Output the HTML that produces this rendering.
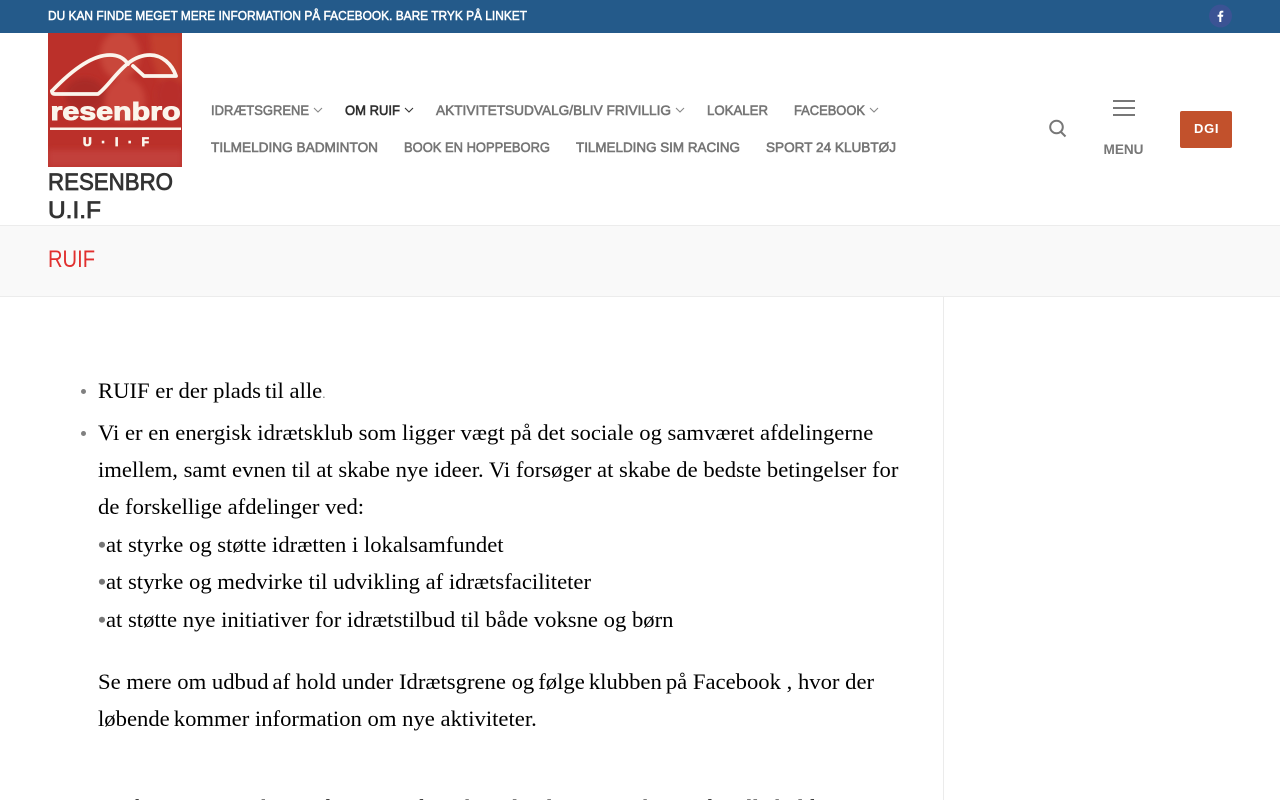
<!DOCTYPE html>
<html lang="da"><head><meta charset="utf-8"><title>RUIF</title>
<style>
html,body{margin:0;padding:0;width:1280px;height:800px;overflow:hidden;background:#fff}
body{position:relative}
.a{position:absolute}
#top{left:0;top:0;width:1280px;height:33px;background:#245a8a}
#title{left:0;top:225px;width:1280px;height:70px;background:#f9f9f9;border-top:1px solid #ececec;border-bottom:1px solid #ececec}
#side{left:943px;top:297px;width:1px;height:503px;background:#ebebeb}
#btn{left:1180px;top:111px;width:52px;height:37px;background:#c2512c;border-radius:2px}
.t{position:absolute;left:98px;font:22.67px/37px "Liberation Serif",serif;color:#000;white-space:nowrap}
.t i{font-style:normal;color:#777;font-weight:bold}
.t b{font-weight:normal;font-size:16px}
.d{position:absolute;left:81px;width:5px;height:5px;border-radius:50%;background:#808080}
svg{position:absolute;left:0;top:0}
.s{font-family:"Liberation Sans",sans-serif}
.n{font:14px "Liberation Sans",sans-serif;fill:#757575;stroke:#757575;stroke-width:.6}
</style></head><body>
<div class="a" id="top"></div>
<div class="a" id="title"></div>
<div class="a" id="side"></div>
<div class="a" id="btn"></div>

<svg width="1280" height="800" viewBox="0 0 1280 800">
<defs>
<filter id="b"><feGaussianBlur stdDeviation="3"/></filter>
<clipPath id="c"><rect x="48" y="33" width="134" height="134"/></clipPath>
</defs>
<text class="s" x="48" y="20" font-size="13" fill="#fff" stroke="#fff" stroke-width=".5" textLength="479" lengthAdjust="spacingAndGlyphs">DU KAN FINDE MEGET MERE INFORMATION PÅ FACEBOOK. BARE TRYK PÅ LINKET</text>
<circle cx="1220.500" cy="16" r="11.500" fill="#3b5394"/>
<path d="M1219.300 22v-5.300h-1.700v-2h1.700v-1.400c0-1.800 1-2.600 2.500-2.600h1.500v1.900h-1c-.7 0-1 .3-1 1v1.100h2l-.3 2h-1.700V22z" fill="#fff"/>

<g clip-path="url(#c)">
<rect x="48" y="33" width="134" height="134" fill="#bb302a"/>
<g filter="url(#b)">
<path d="M150 33h32v60l-22-12-8-22z" fill="#c4412f"/>
<ellipse cx="120" cy="55" rx="20" ry="24" fill="#c9463a"/>
<ellipse cx="85" cy="95" rx="20" ry="17" fill="#a92a26"/>
<ellipse cx="125" cy="100" rx="20" ry="22" fill="#c9443a"/>
<ellipse cx="170" cy="95" rx="14" ry="18" fill="#b82f2b"/>
<rect x="48" y="150" width="134" height="17" fill="#c2403a"/>
</g>
<g fill="none" stroke="#fbf5ec" stroke-width="3.800" stroke-linejoin="round" stroke-linecap="round">
<path d="M52 91C72 70 92 55 110 55c8 0 14 3 18 9"/>
<path d="M52 91c0 2 1 3 3 3h43c14-10 27-39 52-39 12 0 22 9 26 21h-32l-11-10"/>
</g>
<text class="s" x="50.500" y="120" font-size="25" font-weight="bold" fill="#fbf5ec" stroke="#fbf5ec" stroke-width="1" textLength="130" lengthAdjust="spacingAndGlyphs">resenbro</text>
<rect x="50" y="127.500" width="131" height="2.500" fill="#fbf5ec"/>
<text class="s" x="83" y="146" font-size="12" font-weight="bold" fill="#fbf5ec" stroke="#fbf5ec" stroke-width=".8" textLength="66" lengthAdjust="spacing">U · I · F</text>
</g>

<text class="s" x="48" y="190" font-size="24" fill="#333" stroke="#333" stroke-width=".8" textLength="125" lengthAdjust="spacingAndGlyphs">RESENBRO</text>
<text class="s" x="48" y="218" font-size="24" fill="#333" stroke="#333" stroke-width=".8" textLength="53" lengthAdjust="spacingAndGlyphs">U.I.F</text>

<text class="n" x="211" y="115" textLength="98" lengthAdjust="spacingAndGlyphs">IDRÆTSGRENE</text>
<text class="n" x="345" y="115" textLength="55" lengthAdjust="spacingAndGlyphs" style="fill:#2e2e2e;stroke:#2e2e2e">OM RUIF</text>
<text class="n" x="436" y="115" textLength="235" lengthAdjust="spacingAndGlyphs">AKTIVITETSUDVALG/BLIV FRIVILLIG</text>
<text class="n" x="707" y="115" textLength="61" lengthAdjust="spacingAndGlyphs">LOKALER</text>
<text class="n" x="794" y="115" textLength="71" lengthAdjust="spacingAndGlyphs">FACEBOOK</text>
<text class="n" x="211" y="152" textLength="167" lengthAdjust="spacingAndGlyphs">TILMELDING BADMINTON</text>
<text class="n" x="404" y="152" textLength="146" lengthAdjust="spacingAndGlyphs">BOOK EN HOPPEBORG</text>
<text class="n" x="576" y="152" textLength="164" lengthAdjust="spacingAndGlyphs">TILMELDING SIM RACING</text>
<text class="n" x="766" y="152" textLength="130" lengthAdjust="spacingAndGlyphs">SPORT 24 KLUBTØJ</text>
<g fill="none" stroke-width="1.100">
<path d="M314 108l4 4 4-4" stroke="#888"/>
<path d="M405 108l4 4 4-4" stroke="#333"/>
<path d="M676 108l4 4 4-4" stroke="#888"/>
<path d="M870 108l4 4 4-4" stroke="#888"/>
</g>

<g fill="none" stroke="#777" stroke-width="2">
<circle cx="1056.500" cy="127" r="6.300"/>
<path d="M1061 132l4.500 4.500"/>
</g>
<g fill="#777"><rect x="1113" y="100" width="22" height="2"/><rect x="1113" y="107" width="22" height="2"/><rect x="1113" y="114" width="22" height="2"/></g>
<text class="s" x="1103.500" y="154" font-size="14" font-weight="bold" fill="#777" textLength="40" lengthAdjust="spacingAndGlyphs">MENU</text>
<text class="s" x="1194" y="133" font-size="13" font-weight="bold" fill="#fff" letter-spacing=".7">DGI</text>

<text class="s" x="48" y="267" font-size="24" fill="#e1302f" textLength="47" lengthAdjust="spacingAndGlyphs">RUIF</text>
</svg>

<div class="d" style="top:389px"></div>
<div class="d" style="top:431px"></div>
<div class="t" style="top:372px">RUIF er der plads<b> </b>til alle<i style="font-size:13px;font-weight:normal">.</i></div>
<div class="t" style="top:414px">Vi er en energisk idrætsklub som ligger vægt på det sociale og samværet afdelingerne</div>
<div class="t" style="top:451px">imellem, samt evnen til at skabe nye ideer. Vi forsøger at skabe de bedste betingelser for</div>
<div class="t" style="top:488px">de forskellige afdelinger ved:</div>
<div class="t" style="top:526px"><i>•</i>at styrke og støtte idrætten i lokalsamfundet</div>
<div class="t" style="top:563px"><i>•</i>at styrke og medvirke til udvikling af idrætsfaciliteter</div>
<div class="t" style="top:601px"><i>•</i>at støtte nye initiativer for idrætstilbud til både voksne og børn</div>
<div class="t" style="top:663px">Se mere om udbud<b> </b>af hold under Idrætsgrene og<b> </b>følge<b> </b>klubben<b> </b>på Facebook , hvor der</div>
<div class="t" style="top:700px">løbende<b> </b>kommer information om nye aktiviteter.</div>
<div class="t" style="top:789px;word-spacing:.25px">For børn og unge har vi de 3 Hovedmærker til at lære og vokse under alle hold i RUIF</div>
</body></html>
